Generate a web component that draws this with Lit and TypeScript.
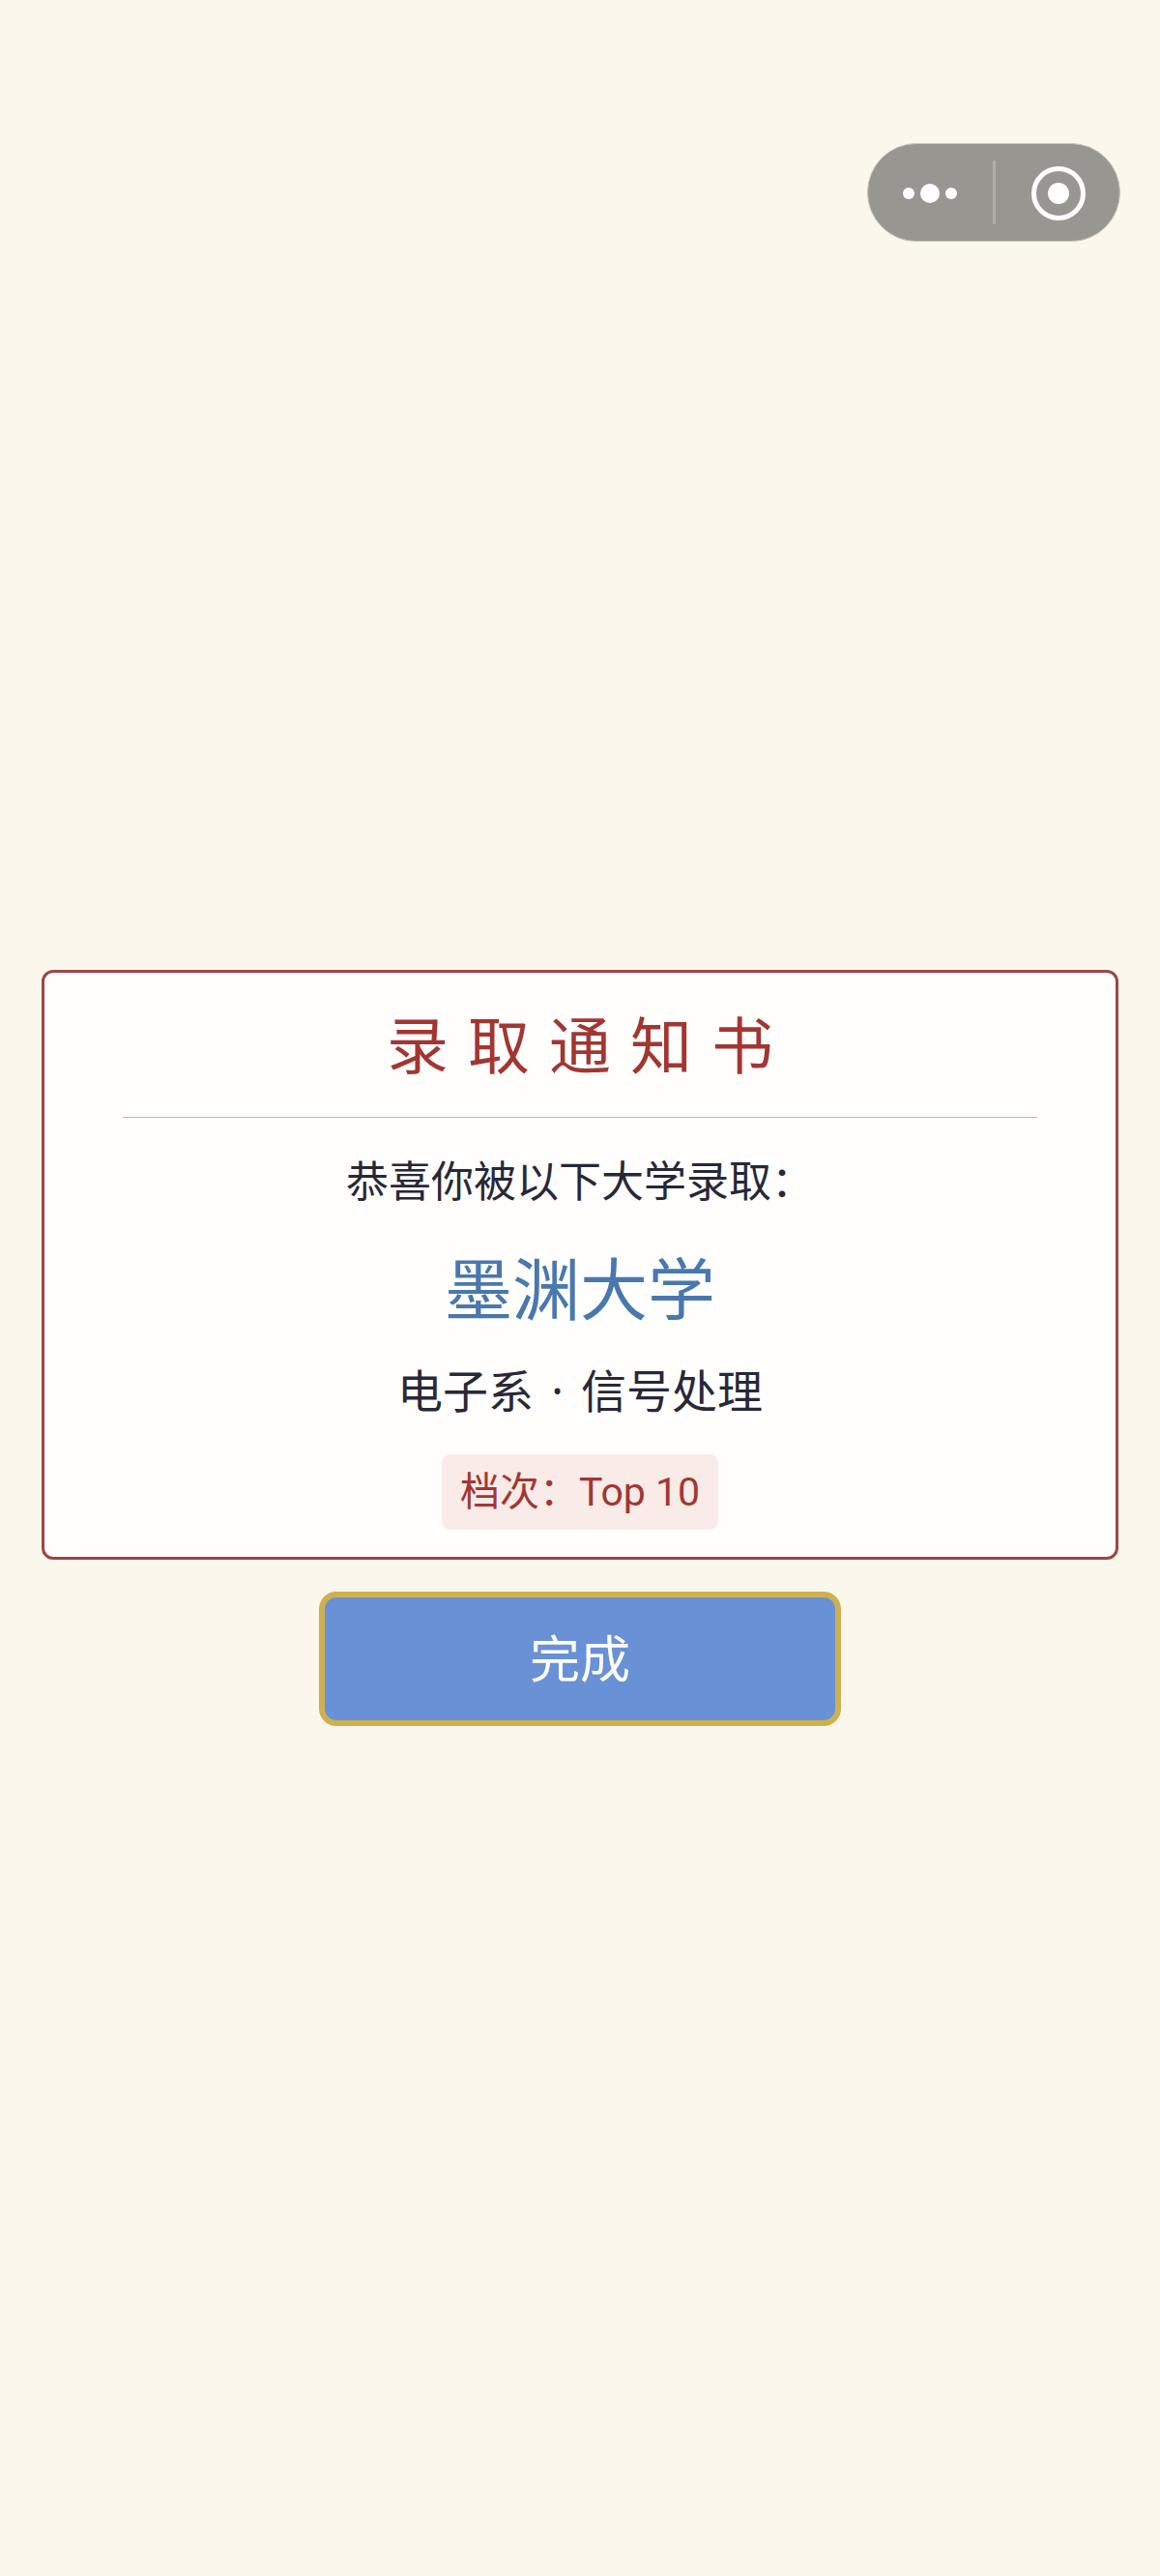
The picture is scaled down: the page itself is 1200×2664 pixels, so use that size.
import { LitElement, html, css } from "lit";
import { customElement } from "lit/decorators.js";

@customElement("app-root")
export class AppRoot extends LitElement {
  static styles = css`
    :host {
      display: block;
      position: relative;
      min-height: 2664px;
      background: #fbf7ed;
      font-family: "Noto Sans CJK SC", "Noto Sans", sans-serif;
      box-sizing: border-box;
      padding: 1003px 43px 0;
    }
    .capsule {
      position: absolute;
      left: 897px;
      top: 148px;
      width: 262px;
      height: 102px;
    }
    .main {
      display: flex;
      flex-direction: column;
      align-items: center;
      gap: 33px;
    }
    .card {
      box-sizing: border-box;
      width: 100%;
      height: 610px;
      background: #fffefd;
      border: 3px solid #9e4646;
      border-radius: 12px;
      padding: 0 81px;
      display: flex;
      flex-direction: column;
      align-items: center;
    }
    .title {
      width: 100%;
      box-sizing: border-box;
      height: 150px;
      border-bottom: 1.5px solid #c9aeae;
      color: #a33632;
      font-size: 64px;
      font-weight: 400;
      letter-spacing: 20px;
      text-indent: 20px;
      line-height: 143px;
      text-align: center;
      white-space: nowrap;
    }
    .sub {
      margin-top: 30px;
      font-size: 44px;
      line-height: 66px;
      color: #272838;
      white-space: nowrap;
    }
    .uni {
      margin-top: 30px;
      font-size: 70px;
      line-height: 96px;
      color: #4878ae;
    }
    .dept {
      margin-top: 25px;
      font-size: 47px;
      line-height: 66px;
      color: #272838;
      white-space: nowrap;
    }
    .dot {
      font-family: "Noto Sans", sans-serif;
      padding: 0 6px;
    }
    .tag {
      margin-top: 33px;
      box-sizing: border-box;
      height: 78px;
      padding: 0 19px;
      background: #f8ebe8;
      border-radius: 9px;
      color: #a33632;
      font-family: Roboto, "Noto Sans CJK SC", sans-serif;
      font-size: 41px;
      line-height: 78px;
      white-space: nowrap;
    }
    .btn {
      box-sizing: border-box;
      width: 540px;
      height: 139px;
      padding-bottom: 6px;
      border: 6px solid #cfb050;
      border-radius: 18px;
      background: #6991d6;
      color: #fff;
      font-size: 52px;
      display: flex;
      align-items: center;
      justify-content: center;
    }
  `;

  render() {
    return html`
      <svg class="capsule" viewBox="0 0 262 102" aria-label="capsule menu">
        <rect x="0.5" y="0.5" width="261" height="101" rx="50.5" fill="#989690" stroke="#c8c6be" stroke-width="1" />
        <circle cx="43" cy="52" r="6" fill="#fff" />
        <circle cx="65" cy="52" r="10" fill="#fff" />
        <circle cx="87" cy="52" r="6" fill="#fff" />
        <rect x="130" y="18" width="3" height="66" fill="#b0aea8" />
        <circle cx="198" cy="52" r="25.5" fill="none" stroke="#fff" stroke-width="5" />
        <circle cx="198" cy="52" r="11" fill="#fff" />
      </svg>
      <div class="main">
        <section class="card">
          <div class="title">录取通知书</div>
          <div class="sub">恭喜你被以下大学录取：</div>
          <div class="uni">墨渊大学</div>
          <div class="dept">电子系<span class="dot"> · </span>信号处理</div>
          <div class="tag">档次：Top 10</div>
        </section>
        <div class="btn">完成</div>
      </div>
    `;
  }
}
